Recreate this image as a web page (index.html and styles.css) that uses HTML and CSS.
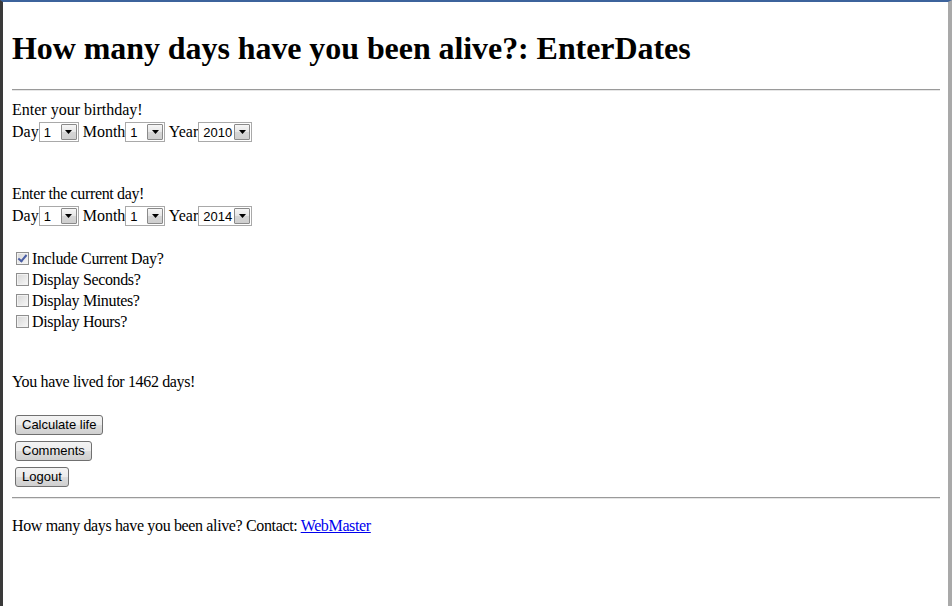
FILE: index.html
```html
<!DOCTYPE html>
<html>
<head>
<meta charset="utf-8">
<title>EnterDates</title>
<link rel="stylesheet" href="styles.css">
</head>
<body>
<div class="page">
  <h1 class="title">How many days have you been alive?: EnterDates</h1>
  <hr class="rule">
  <form class="form">
    <div class="label label-first">Enter your birthday!</div>
    <div class="daterow">Day<span class="select sel-small"><select><option>1</option></select><span class="arrow"><svg width="7" height="4" viewBox="0 0 7 4"><path d="M0 0H7L3.5 4Z" fill="#000"/></svg></span></span> Month<span class="select sel-small"><select><option>1</option></select><span class="arrow"><svg width="7" height="4" viewBox="0 0 7 4"><path d="M0 0H7L3.5 4Z" fill="#000"/></svg></span></span> Year<span class="select sel-year"><select><option>2010</option></select><span class="arrow"><svg width="7" height="4" viewBox="0 0 7 4"><path d="M0 0H7L3.5 4Z" fill="#000"/></svg></span></span></div>

    <div class="label label-gap">Enter the current day!</div>
    <div class="daterow">Day<span class="select sel-small"><select><option>1</option></select><span class="arrow"><svg width="7" height="4" viewBox="0 0 7 4"><path d="M0 0H7L3.5 4Z" fill="#000"/></svg></span></span> Month<span class="select sel-small"><select><option>1</option></select><span class="arrow"><svg width="7" height="4" viewBox="0 0 7 4"><path d="M0 0H7L3.5 4Z" fill="#000"/></svg></span></span> Year<span class="select sel-year"><select><option>2014</option></select><span class="arrow"><svg width="7" height="4" viewBox="0 0 7 4"><path d="M0 0H7L3.5 4Z" fill="#000"/></svg></span></span></div>

    <div class="checks">
      <label class="check"><input type="checkbox" checked>Include Current Day?</label>
      <label class="check"><input type="checkbox">Display Seconds?</label>
      <label class="check"><input type="checkbox">Display Minutes?</label>
      <label class="check"><input type="checkbox">Display Hours?</label>
    </div>

    <div class="result">You have lived for 1462 days!</div>

    <div class="buttons">
      <button type="button" class="btn">Calculate life</button>
      <button type="button" class="btn">Comments</button>
      <button type="button" class="btn">Logout</button>
    </div>
  </form>
  <hr class="rule rule-foot">
  <div class="footer">How many days have you been alive? Contact: <a href="#" class="link">WebMaster</a></div>
</div>
</body>
</html>
```

FILE: styles.css
```css
html, body {
  margin: 0;
  padding: 0;
  background: #ffffff;
}

body {
  font-family: "Liberation Serif", "Times New Roman", serif;
  font-size: 16px;
  color: #000;
}

.page {
  box-sizing: border-box;
  height: 606px;
  border-top: 2px solid #3c639c;
  border-left: 3px solid #3a3a3a;
  border-right: 4px solid #a9a9a9;
  padding: 8px 8px 0 9px;
  overflow: hidden;
}

.title {
  font-size: 32px;
  font-weight: bold;
  letter-spacing: -0.07px;
  margin: 20px 0 22px;
}

.rule {
  border: 0;
  height: 0;
  border-top: 1px solid #9a9a9a;
  border-bottom: 1px solid #e6e6e6;
  margin: 0 0 8px;
}

.form {
  padding-top: 2px;
}

.label {
  letter-spacing: -0.36px;
}

.label-first {
  letter-spacing: 0;
}

.label-gap {
  margin-top: 43px;
}

.daterow {
  display: flex;
  align-items: center;
  height: 20px;
  margin-top: 3px;
  white-space: pre;
}

.select {
  box-sizing: border-box;
  display: inline-flex;
  align-items: center;
  height: 20px;
  border: 1px solid #a9a9a9;
  background: #fff;
  padding: 0 1px 0 0;
}

.sel-small { width: 40px; }
.sel-year { width: 54px; }

.select select {
  appearance: none;
  -webkit-appearance: none;
  border: 0;
  outline: 0;
  background: transparent;
  font-family: "Liberation Sans", Arial, sans-serif;
  font-size: 13px;
  color: #000;
  padding: 0 0 0 4px;
  margin: 0;
  flex: 1;
  min-width: 0;
  height: 18px;
}

.arrow {
  box-sizing: border-box;
  width: 16px;
  height: 16px;
  border: 1px solid #8a8a8a;
  border-radius: 1px;
  background: linear-gradient(#f6f6f6 0%, #e6e6e6 50%, #d5d5d5 51%, #cfcfcf 100%);
  display: flex;
  align-items: center;
  justify-content: center;
}

.checks {
  margin-top: 22px;
}

.check {
  display: flex;
  align-items: center;
  height: 21px;
  letter-spacing: -0.36px;
}

.check input {
  appearance: none;
  -webkit-appearance: none;
  box-sizing: border-box;
  width: 13px;
  height: 13px;
  margin: 0 3px 0 4px;
  border: 1px solid #8f8f8f;
  background: linear-gradient(135deg, #d6d6d6, #f8f8f8);
  box-shadow: inset 0 0 0 1px #f2f2f2;
  position: relative;
}

.check input:checked::after {
  content: "";
  position: absolute;
  left: 3px;
  top: 0px;
  width: 3px;
  height: 7px;
  border-right: 2px solid #4a5ea4;
  border-bottom: 2px solid #4a5ea4;
  transform: rotate(40deg);
}

.result {
  margin-top: 41px;
  letter-spacing: -0.36px;
}

.buttons {
  display: flex;
  flex-direction: column;
  align-items: flex-start;
  gap: 6px;
  margin-top: 24px;
}

.btn {
  box-sizing: border-box;
  height: 20px;
  margin: 0 0 0 3px;
  padding: 0 6px;
  border: 1px solid #707070;
  border-radius: 3px;
  background: linear-gradient(#f3f3f3 0%, #ebebeb 50%, #dddddd 51%, #cfcfcf 100%);
  font-family: "Liberation Sans", Arial, sans-serif;
  font-size: 13px;
  color: #000;
  line-height: 16px;
}

.rule-foot {
  margin-top: 10px;
}

.footer {
  margin-top: 8px;
  padding-top: 10px;
  letter-spacing: -0.36px;
}

.link {
  color: #0000ee;
  text-decoration: underline;
}
```
